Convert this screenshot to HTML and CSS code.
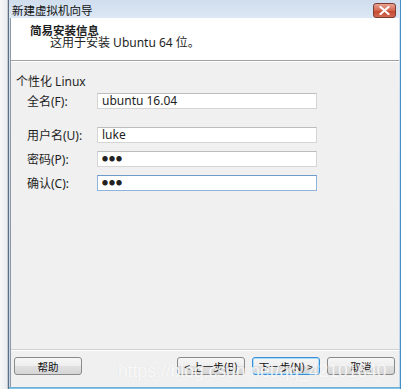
FILE: index.html
```html
<html>
    <head>
        <link rel="stylesheet" href="styles.css">
    </head>
    <body>
    <div class="desk">
        <div class="behind"></div>
        <div class="window">
            <div class="titlebar">
                <span class="title">新建虚拟机向导</span>
                <span class="close">
                    <svg width="11" height="9" viewBox="0 0 11 9"><path d="M1.5 1 L9.5 8 M9.5 1 L1.5 8" stroke="#fff" stroke-width="2.2" stroke-linecap="round"/></svg>
                </span>
            </div>
            <div class="frame">
                <div class="header">
                    <div class="h-title">简易安装信息</div>
                    <div class="h-sub">这用于安装 Ubuntu 64 位。</div>
                </div>
                <div class="content">
                    <div class="group">个性化 Linux</div>
                    <div class="form">
                        <label>全名(F):</label>
                        <div class="input">ubuntu 16.04</div>
                        <label class="gap">用户名(U):</label>
                        <div class="input gap">luke</div>
                        <label>密码(P):</label>
                        <div class="input dots">●●●</div>
                        <label>确认(C):</label>
                        <div class="input dots focus">●●●</div>
                    </div>
                </div>
                <div class="footer">
                    <button class="btn">帮助</button>
                    <div class="spacer"></div>
                    <button class="btn">&lt; 上一步(B)</button>
                    <button class="btn default">下一步(N) &gt;</button>
                    <button class="btn">取消</button>
                </div>
            </div>
            <div class="bottom"></div>
        </div>
        <div class="watermark">https://blog.csdn.net/qq_42101640</div>
    </div>
    </body>
</html>
```
FILE: styles.css
```css
body {
    margin: 0;
    background-color: #f4f4f4;
    font-family: "Noto Sans", "Noto Sans CJK SC", sans-serif;
    font-size: 12px;
    color: #1e1e1e;
}
.desk {
    position: relative;
    width: 401px;
    height: 389px;
    overflow: hidden;
    display: flex;
}
.behind {
    width: 7px;
    background: linear-gradient(to right, #f7f7f7, #e9ecef);
    border-right: 1px solid #c8ccd2;
}
.window {
    flex: 1;
    display: flex;
    flex-direction: column;
    border-left: 1px solid #5f6f82;
    border-right: 1px solid #3f8fc4;
    background: linear-gradient(#d5e2f1, #c3d5ea);
}
.titlebar {
    height: 20px;
    display: flex;
    align-items: center;
    padding-left: 3px;
    padding-right: 4px;
    background: linear-gradient(#cfdded, #dde8f5);
}
.title {
    flex: 1;
    font-family: "Noto Sans CJK SC", sans-serif;
    font-size: 11.5px;
    color: #111;
    padding-top: 2px;
}
.close {
    width: 21px;
    height: 13px;
    margin-top: 3px;
    border: 1px solid #7b3a32;
    border-radius: 3px;
    background: linear-gradient(#e8a394, #d4674f 50%, #c3452c 51%, #d26a52);
    display: flex;
    align-items: center;
    justify-content: center;
}
.frame {
    flex: 1;
    margin-left: 1px;
    margin-right: 1px;
    display: flex;
    flex-direction: column;
    background-color: #f0f0f0;
    border-left: 1px solid #8d99a7;
}
.header {
    height: 42px;
    background-color: #fff;
    border-bottom: 1px solid #a0a0a0;
    box-shadow: 0 1px 0 #ffffff;
    padding-left: 19px;
}
.h-title {
    font-family: "Noto Sans CJK SC", sans-serif;
    font-weight: bold;
    font-size: 11.5px;
    margin-top: 6px;
    line-height: 13px;
}
.h-sub {
    padding-left: 20px;
    line-height: 12px;
    margin-top: 0px;
}
.content {
    height: 288px;
    padding-left: 5px;
    border-bottom: 1px solid #d0d0d0;
    box-shadow: 0 1px 0 #ffffff;
}
.group {
    margin-top: 14px;
    line-height: 14px;
}
.form {
    margin-top: 3px;
    margin-left: 11px;
    display: grid;
    grid-template-columns: 70px 220px;
    row-gap: 6px;
    align-items: center;
}
.form .gap {
    margin-top: 10px;
}
.input {
    height: 14px;
    line-height: 14px;
    padding-left: 4px;
    background-color: #fff;
    border: 1px solid #d5d5d5;
    border-top-color: #bdbdbd;
}
.dots {
    font-size: 6px;
    letter-spacing: 1px;
    color: #222;
}
.focus {
    border-color: #8fb3d9;
    border-top-color: #6e9bcb;
}
.footer {
    height: 30px;
    display: flex;
    align-items: flex-start;
    padding-top: 7px;
    padding-left: 3px;
    padding-right: 4px;
    gap: 7px;
}
.spacer {
    flex: 1;
}
.btn {
    width: 68px;
    height: 18px;
    padding: 0;
    font-family: "Noto Sans CJK SC", sans-serif;
    font-size: 10.5px;
    color: #111;
    border: 1px solid #8a8a8a;
    border-radius: 3px;
    background: linear-gradient(#f6f6f6, #eeeeee 50%, #e0e0e0 51%, #d6d6d6);
}
.btn.default {
    border-color: #3c8fd6;
    box-shadow: inset 0 0 0 1px #a8dcf8;
}
.bottom {
    height: 5px;
    background: linear-gradient(#55a8d8, #9ccbe6);
}
.watermark {
    position: absolute;
    left: 118px;
    top: 361px;
    font-family: "Liberation Sans", sans-serif;
    font-size: 17.5px;
    color: rgba(255, 255, 255, 0.8);
    text-shadow: 0 0 1px rgba(190, 190, 190, 0.35);
    white-space: nowrap;
    pointer-events: none;
}
```
